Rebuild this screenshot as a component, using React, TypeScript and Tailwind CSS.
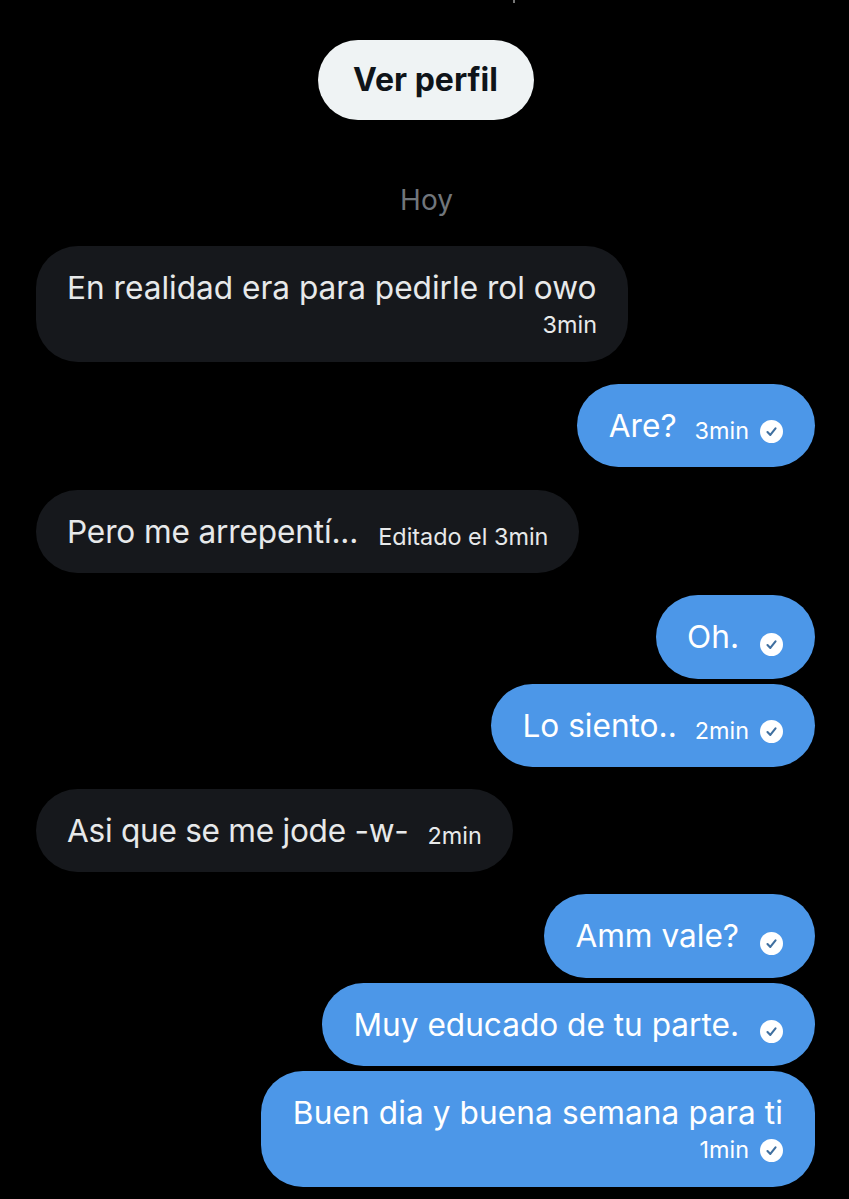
import { ReactNode } from "react"

function Check({ className = "" }: { className?: string }) {
  return (
    <svg viewBox="0 0 24 24" className={`h-[23px] w-[23px] shrink-0 ${className}`}>
      <circle cx="12" cy="12" r="12" fill="#ffffff" />
      <path d="M7.8 12.6l3 3 5.4-6.8" fill="none" stroke="#3f6f9f" strokeWidth="2.2" strokeLinecap="round" strokeLinejoin="round" />
    </svg>
  )
}

function Meta({ time }: { time?: string }) {
  return (
    <div className={`flex shrink-0 items-center text-[23.4px] leading-[30px] ${time ? "ml-[18px] gap-[11px]" : "ml-[21px]"}`}>
      {time && <span className="translate-y-[5px]">{time}</span>}
      <Check className={time ? "translate-y-[6px]" : "translate-y-[7px]"} />
    </div>
  )
}

function Theirs({ className, children }: { className: string; children: ReactNode }) {
  return (
    <div className={`self-start rounded-[42px] bg-[#16181c] px-[31px] text-[#e7e9ea] ${className}`}>
      {children}
    </div>
  )
}

function Mine({ className, children }: { className: string; children: ReactNode }) {
  return (
    <div className={`self-end rounded-[42px] bg-[#4c97e8] pr-[32px] pl-[31.5px] text-white ${className}`}>
      {children}
    </div>
  )
}

export default function App() {
  return (
    <div className="relative flex min-h-[1199px] flex-col overflow-hidden bg-black px-[34px] pt-[40px] text-[31.6px] leading-[40px] [font-family:Inter,sans-serif]">
      {/* clipped descender from the line above the crop */}
      <div className="absolute top-0 left-[513px] h-[3px] w-[2px] bg-[#777777]" />

      <button className="ml-[2px] flex h-[80px] w-[216px] items-center justify-center self-center rounded-full bg-[#eff3f4] text-[32px] font-bold text-[#0f1419]">
        Ver perfil
      </button>
      <div className="mt-[60px] ml-[4px] self-center text-[28px] leading-[40px] text-[#71767b]">Hoy</div>

      <Theirs className="mt-[26px] ml-[2px] flex h-[116px] w-[592px] flex-col pt-[22px]">
        <span>En realidad era para pedirle rol owo</span>
        <span className="self-end text-[23.4px] leading-[34px]">3min</span>
      </Theirs>

      <Mine className="mt-[22px] flex h-[83px] items-center">
        <span>Are?</span>
        <Meta time="3min" />
      </Mine>

      <Theirs className="mt-[23px] ml-[2px] flex h-[83px] items-center">
        <span className="tracking-[-0.15px]">Pero me arrepentí...</span>
        <span className="ml-[20px] translate-y-[5px] text-[23.4px] leading-[30px]">Editado el 3min</span>
      </Theirs>

      <Mine className="mt-[22px] flex h-[84px] items-center">
        <span>Oh.</span>
        <Meta />
      </Mine>
      <Mine className="mt-[5px] flex h-[83px] items-center">
        <span>Lo siento..</span>
        <Meta time="2min" />
      </Mine>

      <Theirs className="mt-[22px] ml-[2px] flex h-[83px] items-center">
        <span className="tracking-[-0.27px]">Asi que se me jode -w-</span>
        <span className="ml-[19px] translate-y-[5px] text-[23.4px] leading-[30px]">2min</span>
      </Theirs>

      <Mine className="mt-[22px] flex h-[84px] items-center">
        <span>Amm vale?</span>
        <Meta />
      </Mine>
      <Mine className="mt-[5px] flex h-[83px] items-center">
        <span>Muy educado de tu parte.</span>
        <Meta />
      </Mine>
      <Mine className="mt-[5px] flex h-[116px] flex-col pt-[22px]">
        <span className="tracking-[0.1px]">Buen dia y buena semana para ti</span>
        <div className="flex items-center gap-[11px] self-end text-[23.4px] leading-[34px]">
          <span>1min</span>
          <Check />
        </div>
      </Mine>
    </div>
  )
}
